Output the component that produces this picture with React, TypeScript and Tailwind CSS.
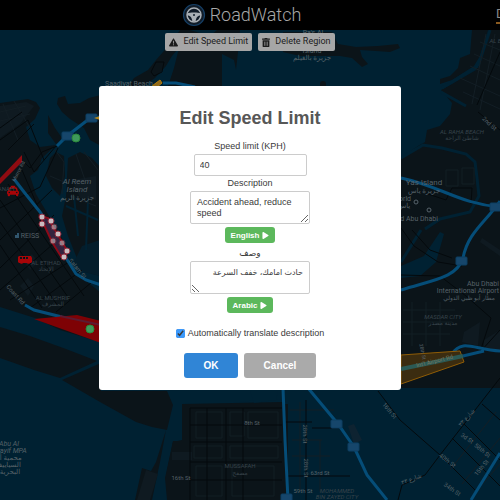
import { useState } from "react";
import type { ReactNode } from "react";
import { FaPlay, FaTaxi, FaTrashAlt } from "react-icons/fa";
import { FaTriangleExclamation } from "react-icons/fa6";

const water = [
  "M401 158L423 145L442 148L466 154L475 162L477 178L479 196L470 212L440 219L425 229",
  "M421 230L401 262M441 92L466 106M478 66L442 88M478 66L490 30",
];

const highways = [
  "M57 146L67 136L89 119L100 117",
  "M14 179L24 192L40 212L54 232",
  "M66 258L76 274L86 280L101 285",
  "M25 305L34 310L62 317",
  "M163 83L176 83L195 87",
  "M401 178C440 186 460 204 500 207",
  "M500 201C486 222 468 232 463 258C457 278 432 280 401 290",
  "M283 388L285 440L288 500",
  "M308 388L338 424L354 447L367 475L387 500",
  "M500 453L471 500",
  "M452 354C462 338 475 350 500 351M463 356L484 351",
];

const streets = [
  "M0 208L40 187L58 148M0 240L52 190M0 268L54 215M0 290L60 238M10 300L72 260M30 308L82 270M56 312L92 282",
  "M8 184L84 296M0 200L70 300M0 222L58 306M0 245L42 308M24 152L34 172L56 146M22 170L40 212",
  "M0 140L28 120L44 160M8 150L34 124M0 128L22 112",
  "M477 105L500 52M478 112L500 130M401 228L414 246L438 262L462 266M412 230L430 250L452 258",
  "M428 194L446 200L452 188L472 188L471 204M401 275L440 276L466 296L491 318L480 352L500 330",
  "M378 391L400 420L440 455L475 490M500 378L440 455L425 475L402 485L398 500",
  "M190 408V500M207 408V500M226 408V500M243 408V500M190 408H282M190 425H282M190 442H282M190 462H282M190 480H282",
  "M306 400V500M286 476H350M285 422H312M312 428H342",
  "M452 438L500 486M462 422L500 460M482 404L500 420",
];

const blocks = [
  "M0 112L26 106M0 121L30 114M3 104L18 140M14 101L30 128",
  "M55 150L64 162L62 194M76 154L85 180M84 152L98 170M50 176L64 182M70 196L96 206",
  "M403 310H455M403 322H452M403 334H450M412 302V346M426 302V346M440 302V346",
  "M460 78L500 96M463 92L500 109M470 66L500 80M474 54L500 66M480 42L500 50M486 34L472 104M495 34L480 110",
  "M196 412H222V438H196ZM230 412H244V436H230ZM248 412H278V438H248ZM194 446H222V458H194ZM230 446H278V458H230ZM196 466H222V496H196ZM232 466H274V496H232Z",
  "M290 410H334M292 440H322M292 456H330M300 402V492M320 440V492",
  "M446 170H458V186H446ZM462 168H474V184H462Z",
  "M450 470L496 412M462 484L500 438M474 494L500 464",
];

const pins = [
  [42, 217, 1],
  [51, 221, 1],
  [42, 224, 1],
  [54, 227, 0.6],
  [58, 234, 1],
  [53, 241, 0.6],
  [62, 243, 0.6],
  [67, 251, 1],
  [64, 257, 1],
];

const shields = [
  [68, 136],
  [92, 118],
  [496, 207],
  [462, 261],
  [337, 424],
  [354, 447],
  [287, 498],
];

const labels: { text: string; x: number; y: number; size?: number; fill?: string; italic?: boolean; rotate?: number }[] = [
  { text: "Saadiyat Beach", x: 129, y: 86 },
  { text: "Ra's Al", x: 313, y: 35 },
  { text: "Island", x: 312, y: 53 },
  { text: "جزيرة بالغيلم", x: 312, y: 60 },
  { text: "Al Reem", x: 77, y: 184, size: 8, italic: true },
  { text: "Island", x: 77, y: 192, size: 8, italic: true },
  { text: "جزيرة الريم", x: 77, y: 200 },
  { text: "REISS", x: 30, y: 238 },
  { text: "ANAH", x: 6, y: 191, size: 6, fill: "#37434a" },
  { text: "AL ETIHAD", x: 46, y: 265, size: 6, fill: "#37434a" },
  { text: "الإتحاد", x: 46, y: 271, size: 6, fill: "#37434a" },
  { text: "AL MUSHRIF", x: 53, y: 300, size: 6, fill: "#37434a" },
  { text: "المشرف", x: 53, y: 306, size: 6, fill: "#37434a" },
  { text: "Coast Rd", x: 14, y: 296, size: 6, rotate: 48 },
  { text: "Murror Rd", x: 20, y: 172, size: 5, rotate: -62 },
  { text: "Salam St", x: 76, y: 270, size: 6, rotate: 50 },
  { text: "AL BAHYAH", x: 505, y: 43, size: 6, fill: "#37434a", italic: true },
  { text: "AL RAHA BEACH", x: 462, y: 134, size: 6, fill: "#37434a", italic: true },
  { text: "شاطئ الراحة", x: 462, y: 140, size: 6, fill: "#37434a" },
  { text: "2nd St", x: 488, y: 125, size: 6, rotate: 42 },
  { text: "Yas Island", x: 424, y: 185, size: 8 },
  { text: "جزيرة ياس", x: 424, y: 193 },
  { text: "World", x: 402, y: 201, size: 7 },
  { text: "ياس", x: 404, y: 208 },
  { text: "World Abu Dhabi", x: 412, y: 221, size: 7 },
  { text: "Abu Dhabi", x: 483, y: 286 },
  { text: "International Airport", x: 468, y: 293 },
  { text: "مطار أبو ظبي الدولي", x: 469, y: 300, size: 6 },
  { text: "MASDAR CITY", x: 443, y: 319, size: 6, fill: "#37434a", italic: true },
  { text: "مدينة مصدر", x: 443, y: 325, size: 6, fill: "#37434a" },
  { text: "28th St", x: 421, y: 352, size: 5, rotate: 78 },
  { text: "Int'l Airport Rd", x: 435, y: 363, size: 6, fill: "#74775f", rotate: -14 },
  { text: "16th St", x: 388, y: 412, size: 6, rotate: 50 },
  { text: "شارع ٣٣", x: 468, y: 419, size: 6, rotate: -48 },
  { text: "3d St", x: 466, y: 440, size: 6, rotate: 35 },
  { text: "58th St", x: 481, y: 452, size: 6, rotate: 40 },
  { text: "40th St", x: 446, y: 462, size: 6, rotate: 38 },
  { text: "15th St", x: 483, y: 469, size: 6, rotate: -50 },
  { text: "34th St", x: 451, y: 491, size: 6, rotate: 35 },
  { text: "شارع ٣٣", x: 412, y: 481, size: 6, rotate: -20 },
  { text: "28th St", x: 303, y: 434, size: 6, rotate: 90 },
  { text: "28th St", x: 304, y: 468, size: 6, rotate: 90 },
  { text: "63rd St", x: 320, y: 475, size: 6 },
  { text: "59th St", x: 303, y: 493, size: 6 },
  { text: "8th St", x: 252, y: 425, size: 6 },
  { text: "16th St", x: 181, y: 480, size: 6 },
  { text: "MUSSAFAH", x: 240, y: 468, size: 6, fill: "#37434a" },
  { text: "مصفح", x: 240, y: 475, size: 6, fill: "#37434a" },
  { text: "MOHAMMED", x: 337, y: 493, size: 6, fill: "#37434a", italic: true },
  { text: "BIN ZAYED CITY", x: 337, y: 499, size: 6, fill: "#37434a", italic: true },
  { text: "Abu Al", x: 9, y: 446, italic: true },
  { text: "Sayayif MPA", x: 8, y: 453, italic: true },
  { text: "محمية أبو", x: 8, y: 460 },
  { text: "السياييف", x: 8, y: 467 },
  { text: "البحرية", x: 10, y: 474 },
];

function TrafficMap() {
  return (
    <svg
      className="absolute inset-0 h-full w-full"
      viewBox="0 30 500 470"
      preserveAspectRatio="xMidYMid slice"
      role="img"
      aria-label="Traffic map"
    >
      <rect y="30" width="500" height="470" fill="#002132" />

      {/* land */}
      <g fill="#0b1419">
        <path d="M0 103L28 99L36 102L40 108L35 119L26 127L30 140L40 147L56 145L42 158L38 170L30 176L36 194L62 238L72 270L100 292V342L60 330L35 318L0 307Z" />
        <path d="M48 115L55 128L62 138L56 144L48 133Z" />
        <path d="M58 98L65 96L68 104L80 103L89 98L101 95V146L90 140L84 128L70 119L62 112L57 104Z" />
        <path d="M50 158L56 152L64 156L65 176L60 196L52 188L46 176Z" />
        <path d="M68 158L80 152L92 158L101 168V276L86 272L76 256L68 236L62 216L66 196Z" />
        <path d="M180 30L190 30L184 42L172 56L166 66L155 78L142 87L128 87L134 78L148 70L156 60L170 44Z" />
        <path d="M190 30L210 36L217 30H240L238 52L236 70L234 60L222 54L222 86H168L174 68L178 52Z" />
        <path d="M283 32H332L338 44L356 47L378 46L398 44L400 48L390 52L376 51L360 50L362 57L368 64L362 67L352 58L340 56L300 56L283 52Z" />
        <path d="M320 84a3 3 0 0 1 6 0v3h-6z" />
        <path d="M488 30H500V500H283V402L182 404V440L173 442L166 476L168 500H500V388H401V158L418 146L425 142L427 130L440 126L450 114L452 103L441 90L452 84L476 70L484 50Z" />
        <path d="M472 30H488L480 56L474 66L452 80L440 84V79L450 76L458 68L460 58L470 54Z" />
        <path d="M0 327L30 336L66 349L97 361L60 378L34 370L0 358Z" />
        <path d="M62 380L101 363V391H167L173 405L167 430L152 427L136 422L100 402Z" />
        <path d="M166 430L160 462L152 500H135L142 468L151 471L156 462Z" />
        <path d="M182 404H288V500H167L165 478L173 441H182Z" />
      </g>

      {/* slightly lighter parcels */}
      <g fill="#0f1a21">
        <path d="M0 106L26 102L34 106L20 124L0 138Z" />
        <path d="M72 180L96 176V200L80 198Z" />
        <path d="M74 262L82 246L100 240V276L84 272Z" fill="#041d2b" />
        <path d="M20 286l8-8 6 8-6 10zM24 262l8-8 6 8-8 8z" />
        <path d="M146 470L158 474L150 500H137ZM172 452L192 452V460H172Z" />
        <path d="M348 426L354 424L362 440L354 444Z" fill="#0e2331" />
        <path d="M464 332L480 322L478 346L462 342Z" />
        <path d="M484 340L500 330V350H484ZM480 242L500 256V250L482 238Z" />
      </g>

      {/* creeks and lagoons */}
      <g fill="#002132">
        <path d="M401 266L424 256L440 232L444 234L436 262L420 276L401 278Z" />
        <path d="M188 391H283V399L258 400L240 402H196Z" />
        <path d="M250 391H278L276 400L254 403Z" />
      </g>
      <g fill="none" stroke="#002132" strokeWidth="3">
        {water.map((d) => (
          <path key={d} d={d} />
        ))}
        <path d="M74 196L78 236M88 200L86 250M66 206L98 220" strokeWidth="2" />
      </g>

      <g fill="none" stroke="#131e25" strokeWidth="1">
        {blocks.map((d) => (
          <path key={d} d={d} />
        ))}
      </g>
      <g fill="none" stroke="#04090c" strokeWidth="1">
        {streets.map((d) => (
          <path key={d} d={d} />
        ))}
        <path d="M24 162L30 168L42 152L57 146M151 72L156 62L164 62L162 72L154 76Z" strokeWidth="1" />
      </g>
      <g fill="none" stroke="#054d78" strokeWidth="3">
        {highways.map((d) => (
          <path key={d} d={d} />
        ))}
      </g>
      <g fill="#16466b" stroke="#0c3f62" strokeWidth="1">
        {shields.map(([x, y]) => (
          <rect key={`${x}-${y}`} x={x - 6} y={y - 4} width="11" height="8" rx="1" />
        ))}
      </g>

      {/* speed and incident regions */}
      <path d="M401 355L460 351L464 362L401 384Z" fill="#3b2c10" stroke="#8f5c06" />
      <path d="M401 369L435 362L463 356" fill="none" stroke="#2b5a55" strokeWidth="4" />
      <path d="M152 86L160 80L162 83L157 87Z" fill="#8f6a1c" stroke="#b37a0c" />
      <path d="M94 118L100 116V120Z" fill="#b3861c" />
      <path d="M0 178L22 155V162L0 184Z" fill="#8f0c12" />
      <path d="M34 319L77 315L101 321V343Z" fill="#7e0205" />
      <path d="M60 316L101 325" stroke="#5c1a30" strokeWidth="2" />
      <path d="M40 216L48 218L68 252L62 258L52 242Z" fill="#33233f" stroke="#8c0a18" strokeWidth="2" />
      {pins.map(([x, y, opacity]) => (
        <circle key={`${x}-${y}`} cx={x} cy={y} r="3" fill="#c9bcc0" stroke="#8c2a3c" opacity={opacity} />
      ))}
      <g fill="#3f9a5c" stroke="#2b8a3a">
        <circle cx="76" cy="138" r="4" />
        <circle cx="90" cy="329" r="4" />
      </g>
      <FaTaxi x={7} y={185} size={12} color="#a80508" />
      <path
        d="M18 257l1-1h12l1 2v4l-1 1h-1a2 2 0 0 1-3 0h-4a2 2 0 0 1-3 0h-1l-1-1zm2 0v2h2v-2zm3 0v2h2v-2zm3 0v2h2v-2z"
        fill="#a80508"
        fillRule="evenodd"
      />
      <path d="M15 238v-3h2v-2h2v5z" fill="#31566e" />
      <g fill="none" stroke="#56626a">
        <circle cx="416" cy="202" r="2" />
        <circle cx="429" cy="210" r="2" />
      </g>

      <g textAnchor="middle" className="font-['Roboto','DejaVu_Sans',sans-serif]">
        {labels.map((l) => (
          <text
            key={`${l.text}-${l.x}-${l.y}`}
            x={l.x}
            y={l.y}
            fontSize={l.size ?? 7}
            fill={l.fill ?? "#566168"}
            fontStyle={l.italic ? "italic" : undefined}
            transform={l.rotate ? `rotate(${l.rotate} ${l.x} ${l.y})` : undefined}
          >
            {l.text}
          </text>
        ))}
      </g>
    </svg>
  );
}

function Logo() {
  return (
    <svg className="h-6 w-6" viewBox="0 0 24 24" fill="none" aria-hidden="true">
      <circle cx="12" cy="12" r="10.500" fill="#111c28" stroke="#153f66" strokeWidth="1.200" />
      <circle cx="12" cy="12" r="7" stroke="#a9afb5" strokeWidth="1.500" />
      <path
        d="M5 10.500C8 9.200 16 9.200 19 10.500V12.500C16 12.500 14.200 14 13.600 18.500H10.400C9.800 14 8 12.500 5 12.500Z"
        fill="#a9afb5"
      />
      <circle cx="12" cy="12" r="1" fill="#111c28" />
    </svg>
  );
}

function ToolButton({ icon, children }: { icon: ReactNode; children: ReactNode }) {
  return (
    <button
      type="button"
      className="flex h-[18px] items-center gap-[5px] rounded-xs bg-[#a6a6a6] px-1 text-[9px] text-[#1c1c1c]"
    >
      {icon}
      {children}
    </button>
  );
}

function SpeakButton({ children }: { children: ReactNode }) {
  return (
    <button
      type="button"
      className="my-[3px] flex h-4 items-center gap-[3px] rounded-[3px] bg-[#5cb85c] px-[6px] text-[8px] font-bold text-white"
    >
      {children}
      <FaPlay className="h-[7px] w-[7px]" />
    </button>
  );
}

function EditSpeedLimitDialog() {
  const [speed, setSpeed] = useState("40");
  const [english, setEnglish] = useState("Accident ahead, reduce speed");
  const [arabic, setArabic] = useState("حادث امامك، خفف السرعة");
  const [translate, setTranslate] = useState(true);

  return (
    <div
      role="dialog"
      aria-labelledby="dialog-title"
      className="flex w-[302px] flex-col items-center rounded-[3px] bg-white px-4 pt-5 pb-3 font-['Liberation_Sans','DejaVu_Sans',sans-serif] text-[9px] leading-[15px] text-[#3a3a3a]"
    >
      <h2 id="dialog-title" className="mb-[9px] text-lg leading-6 font-bold text-[#575757]">
        Edit Speed Limit
      </h2>

      <label htmlFor="speed">Speed limit (KPH)</label>
      <input
        id="speed"
        value={speed}
        onChange={(e) => setSpeed(e.target.value)}
        className="h-[22px] w-[113px] rounded-xs border border-[#ccc] px-[5px]"
      />

      <label htmlFor="english">Description</label>
      <textarea
        id="english"
        value={english}
        onChange={(e) => setEnglish(e.target.value)}
        className="h-[33px] w-[120px] resize rounded-xs border border-[#ccc] px-[6px] py-[5px] leading-[11px]"
      />
      <SpeakButton>English</SpeakButton>

      <label htmlFor="arabic">وصف</label>
      <textarea
        id="arabic"
        dir="rtl"
        value={arabic}
        onChange={(e) => setArabic(e.target.value)}
        className="h-[33px] w-[120px] resize rounded-xs border border-[#ccc] px-[6px] py-[5px] text-[8px] leading-[11px]"
      />
      <SpeakButton>Arabic</SpeakButton>

      <label className="mt-[10px] flex items-center gap-[3px]">
        <input
          type="checkbox"
          checked={translate}
          onChange={(e) => setTranslate(e.target.checked)}
          className="h-[9px] w-[9px] accent-[#3b99fc]"
        />
        Automatically translate description
      </label>

      <div className="mt-3 flex gap-[6px] text-[10px] font-bold text-white">
        <button type="button" className="h-[25px] w-[54px] rounded-[3px] bg-[#3085d6]">
          OK
        </button>
        <button type="button" className="h-[25px] w-[72px] rounded-[3px] bg-[#aaa]">
          Cancel
        </button>
      </div>
    </div>
  );
}

export default function App() {
  return (
    <div className="relative flex min-h-screen flex-col bg-black font-['Roboto','DejaVu_Sans',sans-serif]">
      <header className="flex h-[30px] items-center bg-black">
        <div className="flex flex-1 items-center justify-center gap-1">
          <Logo />
          <span className="text-lg font-light text-[#a8a8a8]">RoadWatch</span>
        </div>
        <nav className="w-[17px] overflow-hidden pl-[13px]">
          <a href="#dashboard" className="block border-b-2 border-[#8a5a20] text-[13px] leading-4 text-[#888]">
            D
          </a>
        </nav>
      </header>

      <main className="relative flex-1 overflow-hidden">
        <TrafficMap />
        <div className="relative flex justify-center gap-[6px] pt-[3px]">
          <ToolButton icon={<FaTriangleExclamation className="h-[9px] w-[9px]" />}>Edit Speed Limit</ToolButton>
          <ToolButton icon={<FaTrashAlt className="h-[9px] w-[8px]" />}>Delete Region</ToolButton>
        </div>
      </main>

      <div className="absolute inset-0 flex items-center justify-center pb-6">
        <EditSpeedLimitDialog />
      </div>
    </div>
  );
}
